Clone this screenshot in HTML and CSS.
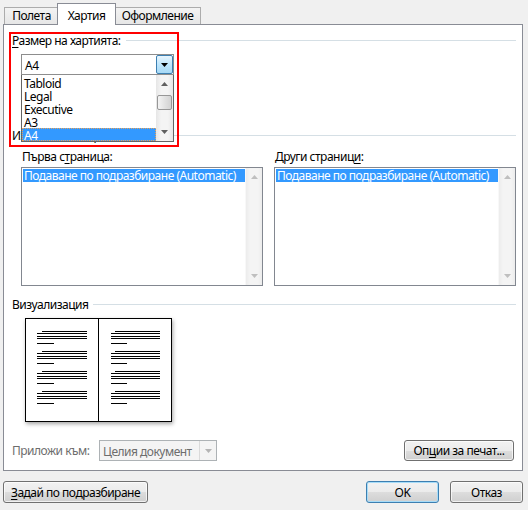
FILE: index.html
```html
<!DOCTYPE html>
<html lang="bg">
  <head>
    <meta charset="UTF-8" />
    <title>Настройка на страниците</title>
    <link rel="stylesheet" href="styles.css">
  </head>
  <body>
    <div class="dialog">
      <div class="tabs">
        <div class="tab">Полета</div>
        <div class="tab active">Хартия</div>
        <div class="tab">Оформление</div>
      </div>

      <div class="panel">
        <div class="group-title"><span><u>Р</u>азмер на хартията:</span></div>

        <div class="combo size-combo">
          <span class="combo-value">A4</span>
          <span class="combo-btn hot">
            <svg width="7" height="4" viewBox="0 0 7 4"><polygon points="0,0 7,0 3.5,4" fill="#000" /></svg>
          </span>
          <div class="dropdown">
            <ul class="dropdown-items">
              <li>Tabloid</li>
              <li>Legal</li>
              <li>Executive</li>
              <li>A3</li>
              <li class="selected">A4</li>
            </ul>
            <div class="scrollbar">
              <svg class="arrow" width="7" height="4" viewBox="0 0 7 4"><polygon points="0,4 7,4 3.5,0" fill="#606060" /></svg>
              <div class="thumb"></div>
              <svg class="arrow down" width="7" height="4" viewBox="0 0 7 4"><polygon points="0,0 7,0 3.5,4" fill="#606060" /></svg>
            </div>
          </div>
        </div>

        <div class="group-title source-title"><span>Източник на хартия</span></div>

        <div class="sources">
          <div class="source">
            <div class="field-label">Първа с<u>т</u>раница:</div>
            <div class="listbox">
              <div class="list-items">
                <div class="list-item selected">Подаване по подразбиране (Automatic)</div>
              </div>
              <div class="scrollbar disabled">
                <svg class="arrow" width="7" height="4" viewBox="0 0 7 4"><polygon points="0,4 7,4 3.5,0" fill="#bfbfbf" /></svg>
                <svg class="arrow down" width="7" height="4" viewBox="0 0 7 4"><polygon points="0,0 7,0 3.5,4" fill="#bfbfbf" /></svg>
              </div>
            </div>
          </div>
          <div class="source">
            <div class="field-label">Други страниц<u>и</u>:</div>
            <div class="listbox">
              <div class="list-items">
                <div class="list-item selected">Подаване по подразбиране (Automatic)</div>
              </div>
              <div class="scrollbar disabled">
                <svg class="arrow" width="7" height="4" viewBox="0 0 7 4"><polygon points="0,4 7,4 3.5,0" fill="#bfbfbf" /></svg>
                <svg class="arrow down" width="7" height="4" viewBox="0 0 7 4"><polygon points="0,0 7,0 3.5,4" fill="#bfbfbf" /></svg>
              </div>
            </div>
          </div>
        </div>

        <div class="group-title preview-title"><span>Визуализация</span></div>

        <!-- two facing pages, four paragraphs each -->
        <div class="book">
          <svg class="page" width="72" height="102" viewBox="0 0 72 102">
            <g stroke="#000" stroke-width="1" shape-rendering="crispEdges">
              <path d="M16 12.5H61M11 14.5H61M11 17.5H61M11 19.5H61M11 24.5H28" />
              <path d="M16 32.5H61M11 34.5H61M11 37.5H61M11 39.5H61M11 44.5H28" />
              <path d="M16 52.5H61M11 54.5H61M11 57.5H61M11 59.5H61M11 64.5H28" />
              <path d="M16 72.5H61M11 74.5H61M11 77.5H61M11 79.5H61M11 84.5H28" />
            </g>
          </svg>
          <svg class="page" width="73" height="102" viewBox="0 0 73 102">
            <g stroke="#000" stroke-width="1" shape-rendering="crispEdges">
              <path d="M16 12.5H61M12 14.5H61M12 17.5H61M12 19.5H61M12 24.5H28" />
              <path d="M16 32.5H61M12 34.5H61M12 37.5H61M12 39.5H61M12 44.5H28" />
              <path d="M16 52.5H61M12 54.5H61M12 57.5H61M12 59.5H61M12 64.5H28" />
              <path d="M16 72.5H61M12 74.5H61M12 77.5H61M12 79.5H61M12 84.5H28" />
            </g>
          </svg>
        </div>

        <div class="apply-row">
          <span class="apply-label">Приложи към:</span>
          <div class="combo disabled">
            <span class="combo-value">Целия документ</span>
            <span class="combo-btn">
              <svg width="7" height="4" viewBox="0 0 7 4"><polygon points="0,0 7,0 3.5,4" fill="#b4b4b4" /></svg>
            </span>
          </div>
          <button class="btn print-options">Оп<u>ц</u>ии за печат...</button>
        </div>

        <div class="highlight"></div>
      </div>

      <div class="footer">
        <button class="btn default-btn"><u>З</u>адай по подразбиране</button>
        <button class="btn ok">OK</button>
        <button class="btn cancel">Отказ</button>
      </div>
    </div>
  </body>
</html>
```

FILE: styles.css
```css
* {
  box-sizing: border-box;
}

body {
  margin: 0;
  width: 528px;
  height: 510px;
  overflow: hidden;
  background-color: #f0f0f0;
  font-family: "Noto Sans", "Segoe UI", sans-serif;
  font-size: 12px;
  letter-spacing: -0.5px;
  white-space: nowrap;
  color: #000;
}

u {
  text-decoration-thickness: 1px;
  text-underline-offset: 2px;
}

.dialog {
  padding: 3px 5px 0 3px;
}

/* Tab strip */

.tabs {
  display: flex;
  align-items: flex-end;
  height: 21px;
  padding-left: 1px;
  position: relative;
  z-index: 1;
}

.tab {
  height: 17px;
  line-height: 15px;
  text-align: center;
  border: 1px solid #acacac;
  border-bottom: none;
  background: linear-gradient(#f3f3f3, #e6e6e6);
}

.tab:nth-child(1) {
  width: 55px;
}

.tab:nth-child(3) {
  width: 87px;
}

.tab.active {
  width: 59px;
  height: 22px;
  margin: 0 -2px -1px;
  padding-top: 4px;
  border-color: #898c95;
  background: #fff;
  position: relative;
  z-index: 1;
}

/* Tab page */

.panel {
  position: relative;
  height: 447px;
  border: 1px solid #898c95;
  background-color: #fff;
  padding: 8px 6px 0 8px;
}

.group-title {
  display: flex;
  align-items: center;
  gap: 5px;
  height: 15px;
  line-height: 15px;
}

.group-title::after {
  content: "";
  flex: 1;
  height: 1px;
  background-color: #d5dfe5;
}

.source-title {
  margin-top: 53px;
}

.preview-title {
  margin-top: 11px;
}

/* Combo boxes */

.combo {
  position: relative;
  display: flex;
  align-items: center;
  height: 21px;
  border: 1px solid #8d8d8d;
  background-color: #fff;
}

.combo-value {
  flex: 1;
  padding: 1px 0 0 3px;
  line-height: 15px;
}

.combo-btn {
  display: flex;
  align-items: center;
  justify-content: center;
  width: 17px;
  height: 100%;
}

.combo-btn.hot {
  border: 1px solid #3c7fb1;
  border-radius: 2px;
  background: linear-gradient(#e8f5fd, #bee6fd 50%, #a7d9f5);
}

.size-combo {
  width: 153px;
  margin: 6px 0 0 9px;
}

.dropdown {
  position: absolute;
  top: calc(100% + 1px);
  left: -1px;
  right: -1px;
  height: 67px;
  display: flex;
  border: 1px solid #646464;
  border-top: none;
  background-color: #fff;
  z-index: 2;
}

.dropdown-items {
  flex: 1;
  margin: 0;
  padding: 1px 0 0;
  list-style: none;
}

.dropdown-items li {
  height: 13px;
  line-height: 15px;
  padding-left: 2px;
}

.dropdown-items li.selected {
  background-color: #3399ff;
  color: #fff;
  outline: 1px dotted #e8a25a;
  outline-offset: -1px;
}

.combo.disabled {
  width: 118px;
  border-color: #adb2b5;
  background-color: #f4f4f4;
  color: #6d6d6d;
}

.combo.disabled .combo-btn {
  border-left: 1px solid #dadada;
}

/* Scroll bars */

.scrollbar {
  position: relative;
  width: 17px;
  display: flex;
  flex-direction: column;
  align-items: center;
  background: linear-gradient(90deg, #e6e6e6, #f4f4f4 30%, #f4f4f4 70%, #e6e6e6);
}

.scrollbar .arrow {
  margin-top: 7px;
}

.scrollbar .arrow.down {
  margin-top: auto;
  margin-bottom: 7px;
}

.scrollbar .thumb {
  width: 15px;
  height: 15px;
  margin-top: 9px;
  border: 1px solid #979797;
  border-radius: 2px;
  background: linear-gradient(90deg, #f4f4f4, #e2e2e2 50%, #d2d2d2);
}

.scrollbar.disabled {
  background: linear-gradient(90deg, #ececec, #f4f4f4 25%, #f4f4f4 75%, #ececec);
  border-left: 1px solid #f8f8f8;
}

/* Paper source lists */

.sources {
  display: grid;
  grid-template-columns: 1fr 1fr;
  column-gap: 11px;
  margin-top: 6px;
  padding-left: 9px;
}

.field-label {
  line-height: 15px;
  margin-bottom: 3px;
  padding-left: 1px;
}

.listbox {
  display: flex;
  height: 119px;
  border: 1px solid #828790;
}

.list-items {
  flex: 1;
  min-width: 0;
  padding: 1px 0 0 1px;
}

.list-item {
  height: 13px;
  line-height: 14px;
  padding-left: 1px;
}

.list-item.selected {
  background-color: #3399ff;
  color: #fff;
}

/* Preview */

.book {
  display: flex;
  width: 147px;
  height: 104px;
  margin: 6px 0 0 13px;
  border: 1px solid #000;
  background-color: #fff;
  box-shadow: 1px 2px 4px rgba(0, 0, 0, 0.35);
}

.page + .page {
  border-left: 1px solid #000;
  width: 74px;
}

/* Bottom rows */

.apply-row {
  display: flex;
  align-items: center;
  height: 21px;
  margin-top: 18px;
}

.apply-label {
  width: 87px;
  color: #6d6d6d;
}

.btn {
  height: 22px;
  padding: 0 4px;
  border: 1px solid #707070;
  border-radius: 3px;
  background: linear-gradient(#f2f2f2, #ebebeb 50%, #dddddd 51%, #cfcfcf);
  box-shadow: inset 0 0 0 1px rgba(255, 255, 255, 0.7);
  font-family: inherit;
  font-size: 12px;
  letter-spacing: inherit;
  white-space: nowrap;
  color: #000;
}

.print-options {
  width: 110px;
  height: 21px;
  margin: 0 2px 0 auto;
}

.footer {
  display: flex;
  gap: 11px;
  margin-top: 10px;
}

.default-btn {
  width: 145px;
  margin-right: auto;
}

.ok,
.cancel {
  width: 73px;
}

.ok {
  border-color: #3c7fb1;
  box-shadow: inset 0 0 0 1px #a7dcf8;
}

/* Attention frame around the paper size field */

.highlight {
  position: absolute;
  left: 5px;
  top: 7px;
  width: 170px;
  height: 115px;
  border: 2px solid #ff0000;
  z-index: 3;
  pointer-events: none;
}
```
